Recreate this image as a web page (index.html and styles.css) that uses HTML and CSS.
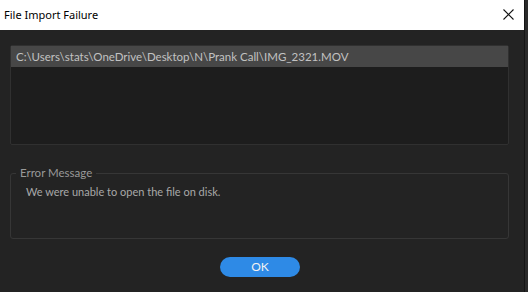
FILE: index.html
```html
<!DOCTYPE html>
<html lang="en">
<head>
    <meta charset="UTF-8">
    <title>File Import Failure</title>
    <link rel="stylesheet" href="styles.css">
</head>
<body>
    <div class="window">
        <div class="dialog">
            <header class="titlebar">
                <span class="title">File Import Failure</span>
                <svg class="close" width="11" height="11" viewBox="0 0 11 11">
                    <path d="M0.5 0.5L10.5 10.5M10.5 0.5L0.5 10.5" stroke="#111" stroke-width="1.1" fill="none"/>
                </svg>
            </header>

            <div class="content">
                <div class="file-list">
                    <div class="file-row selected">C:\Users\stats\OneDrive\Desktop\N\Prank Call\IMG_2321.MOV</div>
                </div>

                <fieldset class="error-box">
                    <legend>Error Message</legend>
                    <p class="message">We were unable to open the file on disk.</p>
                </fieldset>

                <div class="actions">
                    <button class="ok-btn">OK</button>
                </div>
            </div>
        </div>
        <div class="behind"></div>
    </div>
</body>
</html>
```

FILE: styles.css
```css
body {
    margin: 0;
    width: 528px;
    height: 292px;
    overflow: hidden;
    background-color: #1b1b1b;
    font-family: 'Lato', 'Open Sans', sans-serif;
}
.window {
    display: flex;
    height: 292px;
}
.dialog {
    width: 525px;
    display: flex;
    flex-direction: column;
    background-color: #232323;
}
.behind {
    width: 3px;
    background-color: #2a2a2a;
    border-left: 1px solid #151515;
}
.titlebar {
    height: 30px;
    background-color: #fff;
    display: flex;
    align-items: center;
    justify-content: space-between;
    padding: 0 10px 0 4px;
}
.title {
    font-family: 'Noto Sans', sans-serif;
    font-size: 11px;
    color: #000;
    margin-top: -1px;
}
.close {
    margin-top: -2px;
}
.content {
    flex: 1;
    padding: 15px 15px 0 10px;
}
.file-list {
    height: 98px;
    background-color: #1d1d1d;
    border: 1px solid #303030;
    border-radius: 2px;
}
.file-row {
    height: 21px;
    line-height: 21px;
    padding-left: 5px;
    font-size: 11.5px;
    color: #c2c2c2;
    white-space: nowrap;
}
.file-row.selected {
    background-color: #474747;
}
.error-box {
    margin: 20px 0 0 0;
    padding: 0 0 0 15px;
    height: 72px;
    border: 1px solid #363636;
    border-radius: 3px;
}
.error-box legend {
    padding: 0 4px;
    margin-left: -10px;
    font-size: 11.5px;
    line-height: 16px;
    color: #999;
}
.message {
    margin: 4px 0 0 0;
    font-size: 11px;
    color: #a8a8a8;
}
.actions {
    padding: 16px 0 0 210px;
}
.ok-btn {
    width: 80px;
    height: 20px;
    border: none;
    border-radius: 10px;
    background-color: #2e8ae6;
    color: #f2f2f2;
    font-family: 'Lato', 'Open Sans', sans-serif;
    font-size: 12px;
    padding: 0;
    cursor: pointer;
}
```
